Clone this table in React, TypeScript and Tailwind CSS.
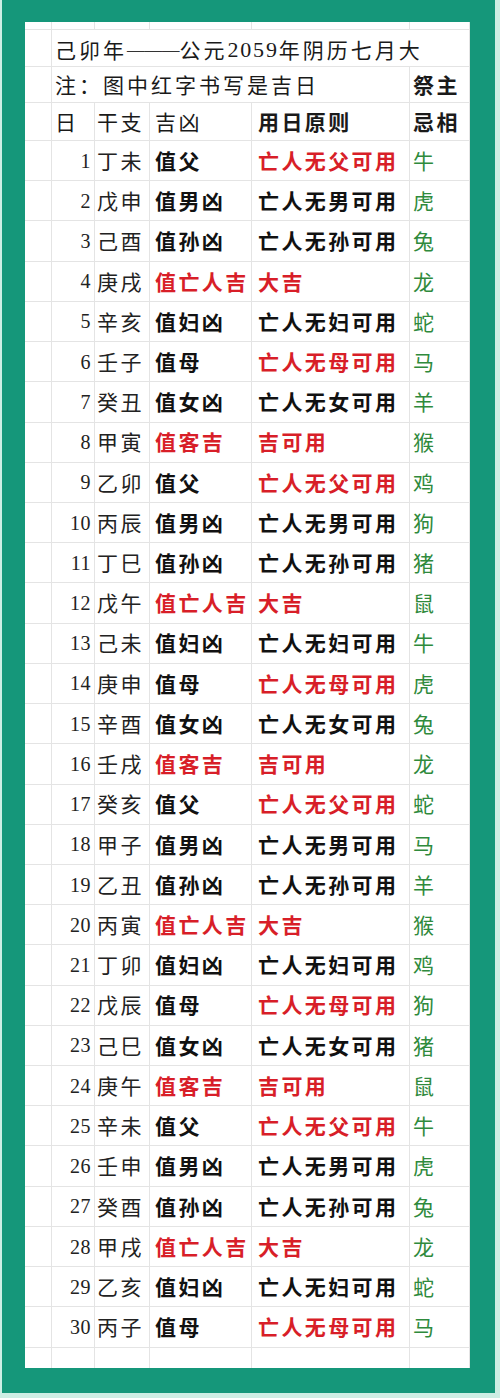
import React from "react";

const stems = "甲乙丙丁戊己庚辛壬癸";
const branches = "子丑寅卯辰巳午未申酉戌亥";
const animals = "牛虎兔龙蛇马羊猴鸡狗猪鼠";

// 8-day cycle of 吉凶 and the matching rule, red = lucky
const cycle = [
  { v: "值父", vRed: false, r: "亡人无父可用", rRed: true },
  { v: "值男凶", vRed: false, r: "亡人无男可用", rRed: false },
  { v: "值孙凶", vRed: false, r: "亡人无孙可用", rRed: false },
  { v: "值亡人吉", vRed: true, r: "大吉", rRed: true },
  { v: "值妇凶", vRed: false, r: "亡人无妇可用", rRed: false },
  { v: "值母", vRed: false, r: "亡人无母可用", rRed: true },
  { v: "值女凶", vRed: false, r: "亡人无女可用", rRed: false },
  { v: "值客吉", vRed: true, r: "吉可用", rRed: true },
];

const days = Array.from({ length: 30 }, (_, i) => ({
  n: i + 1,
  gz: stems[(3 + i) % 10] + branches[(7 + i) % 12],
  ...cycle[i % 8],
  animal: animals[i % 12],
}));

const cjk = "font-['Noto_Sans_CJK_SC',sans-serif]";
const cell = "border-r border-b border-[#e4e4e4] flex items-center shrink-0";

const App = () => {
  return (
    <div className="w-[500px] h-[1398px] bg-[#cdeee4] pl-[2px]">
      <div className="w-[493px] h-[1393px] bg-[#15977a] pt-[22px] pl-[23px]">
        <div className={`w-[445px] bg-white ${cjk} text-[21px] tracking-[2.4px] text-[#1a1a1a]`}>
          {/* blank top row */}
          <div className="flex h-[8px]">
            <div className={`${cell} w-[27px]`} />
            <div className={`${cell} w-[43px]`} />
            <div className={`${cell} w-[55px]`} />
            <div className={`${cell} w-[102px]`} />
            <div className={`${cell} w-[158px]`} />
            <div className={`${cell} w-[60px]`} />
          </div>

          {/* title */}
          <div className="flex h-[37px]">
            <div className={`${cell} w-[27px]`} />
            <div className={`${cell} w-[418px] pl-[3px] pt-[3px] whitespace-nowrap tracking-[3px]`}>
              己卯年
              <span className="font-['Liberation_Serif',serif] text-[17.5px] tracking-[0px] text-[#333]">———</span>
              公元
              <span className="font-['Liberation_Serif',serif] text-[22px] tracking-[1.8px]">2059</span>
              年阴历七月大
            </div>
          </div>

          {/* note */}
          <div className="flex h-[36px]">
            <div className={`${cell} w-[27px]`} />
            <div className={`${cell} w-[358px] pl-[3px] whitespace-nowrap tracking-[3px]`}>
              注：图中红字书写是吉日
            </div>
            <div className={`${cell} w-[60px] pl-[3px] font-bold`}>祭主</div>
          </div>

          {/* header */}
          <div className="flex h-[38px]">
            <div className={`${cell} w-[27px]`} />
            <div className={`${cell} w-[43px] pl-[3px]`}>日</div>
            <div className={`${cell} w-[55px] pl-[2px]`}>干支</div>
            <div className={`${cell} w-[102px] pl-[5px]`}>吉凶</div>
            <div className={`${cell} w-[158px] pl-[6px] font-bold`}>用日原则</div>
            <div className={`${cell} w-[60px] pl-[3px] font-bold`}>忌相</div>
          </div>

          {days.map((d) => (
            <div key={d.n} className="flex h-[40.23px]">
              <div className={`${cell} w-[27px]`} />
              <div
                className={`${cell} w-[43px] justify-end pr-[3px] font-['Liberation_Serif',serif] text-[20px] tracking-[0.5px] text-[#222]`}
              >
                {d.n}
              </div>
              <div className={`${cell} w-[55px] pl-[2px] text-[#222]`}>{d.gz}</div>
              <div
                className={`${cell} w-[102px] pl-[5px] font-bold whitespace-nowrap ${
                  d.vRed ? "text-[#d81e28]" : "text-[#111]"
                }`}
              >
                {d.v}
              </div>
              <div
                className={`${cell} w-[158px] pl-[6px] font-bold whitespace-nowrap ${
                  d.rRed ? "text-[#d81e28]" : "text-[#111]"
                }`}
              >
                {d.r}
              </div>
              <div className={`${cell} w-[60px] pl-[3px] text-[#2f8a3c]`}>{d.animal}</div>
            </div>
          ))}

          {/* blank bottom row */}
          <div className="flex h-[20px]">
            <div className="border-r border-[#e4e4e4] w-[27px]" />
            <div className="border-r border-[#e4e4e4] w-[43px]" />
            <div className="border-r border-[#e4e4e4] w-[55px]" />
            <div className="border-r border-[#e4e4e4] w-[102px]" />
            <div className="border-r border-[#e4e4e4] w-[158px]" />
            <div className="border-r border-[#e4e4e4] w-[60px]" />
          </div>
        </div>
      </div>
    </div>
  );
};

export default App;
